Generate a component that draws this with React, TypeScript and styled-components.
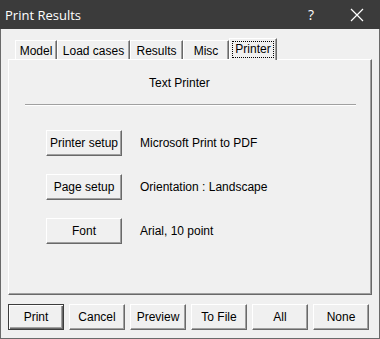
import { FunctionComponent } from 'react'
import styled, { createGlobalStyle } from 'styled-components'

const GlobalStyle = createGlobalStyle`
  html, body {
    margin: 0;
    padding: 0;
    background: #f0f0f0;
  }
  body {
    font-family: "Liberation Sans", Arial, sans-serif;
    font-size: 12px;
    color: #000;
  }
`

const Window = styled.div`
  width: 380px;
  height: 339px;
  box-sizing: border-box;
  display: flex;
  flex-direction: column;
  background: #f0f0f0;
  border: 1px solid #6a6a6a;
  border-top: none;
`

const TitleBar = styled.div`
  height: 29px;
  flex: none;
  display: flex;
  align-items: center;
  background: #3b3b3b;
  color: #fff;
  font-family: "Open Sans", "Noto Sans", sans-serif;
  font-size: 13px;
  padding-left: 5px;
  margin: 0 -1px;
`

const Title = styled.span`
  flex: 1;
`

const TitleButton = styled.span`
  width: 46px;
  height: 29px;
  display: flex;
  align-items: center;
  justify-content: center;
  font-size: 14px;
`

const Body = styled.div`
  flex: 1;
  display: flex;
  flex-direction: column;
  padding: 8px 7px 0 7px;
`

const TabStrip = styled.div`
  display: flex;
  align-items: flex-end;
  height: 22px;
  padding-left: 7px;
  position: relative;
  z-index: 1;
`

const Tab = styled.div<{ $active?: boolean; $width: number }>`
  box-sizing: border-box;
  width: ${p => p.$width}px;
  height: ${p => (p.$active ? 22 : 19)}px;
  display: flex;
  align-items: center;
  justify-content: center;
  border-left: 1px solid #fff;
  border-top: 1px solid #fff;
  border-right: 1px solid #696969;
  box-shadow: inset -1px 0 0 #a0a0a0;
  background: #f0f0f0;
  margin-bottom: ${p => (p.$active ? '-1px' : '0')};
  padding-top: ${p => (p.$active ? '0' : '1px')};
`

const FocusLabel = styled.span`
  outline: 1px dotted #000;
  padding: 0 2px;
  line-height: 15px;
`

const Panel = styled.div`
  height: 236px;
  box-sizing: border-box;
  border: 1px solid;
  border-color: #fff #696969 #696969 #fff;
  box-shadow: inset -1px -1px 0 #a0a0a0;
  display: flex;
  flex-direction: column;
  padding: 0 16px;
`

const Heading = styled.div`
  padding: 16px 0 0 124px;
  height: 20px;
`

const Separator = styled.div`
  height: 1px;
  background: #a0a0a0;
  border-bottom: 1px solid #fff;
  margin: 8px 0 0 0;
  width: 331px;
`

const Rows = styled.div`
  display: flex;
  flex-direction: column;
  gap: 18px;
  padding: 24px 0 0 21px;
`

const Row = styled.div`
  display: flex;
  align-items: center;
  gap: 18px;
`

const Button = styled.button<{ $default?: boolean; $width?: number }>`
  box-sizing: border-box;
  width: ${p => p.$width ?? 76}px;
  height: 26px;
  font: inherit;
  color: #000;
  background: #f0f0f0;
  padding: 0;
  border: 1px solid;
  border-color: ${p => (p.$default ? '#3c3c3c' : '#fff #696969 #696969 #fff')};
  box-shadow: ${p =>
    p.$default
      ? 'inset 1px 1px 0 #fff, inset -1px -1px 0 #696969, inset -2px -2px 0 #a0a0a0'
      : 'inset -1px -1px 0 #a0a0a0'};
  flex: none;
`

const ButtonBar = styled.div`
  display: flex;
  gap: 5px;
  padding: 9px 0 0 0;
`

const CloseIcon = () => (
  <svg width="14" height="14" viewBox="0 0 14 14">
    <path d="M1 1 L13 13 M13 1 L1 13" stroke="#fff" strokeWidth="1.2" fill="none" />
  </svg>
)

const tabs = [
  { label: 'Model', width: 42 },
  { label: 'Load cases', width: 73 },
  { label: 'Results', width: 53 },
  { label: 'Misc', width: 46 },
]

const rows = [
  { button: 'Printer setup', value: 'Microsoft Print to PDF' },
  { button: 'Page setup', value: 'Orientation : Landscape' },
  { button: 'Font', value: 'Arial, 10 point' },
]

const actions = ['Print', 'Cancel', 'Preview', 'To File', 'All', 'None']

const App: FunctionComponent = () => (
  <>
    <GlobalStyle />
    <Window>
      <TitleBar>
        <Title>Print Results</Title>
        <TitleButton>?</TitleButton>
        <TitleButton>
          <CloseIcon />
        </TitleButton>
      </TitleBar>
      <Body>
        <TabStrip>
          {tabs.map(t => (
            <Tab key={t.label} $width={t.width}>
              {t.label}
            </Tab>
          ))}
          <Tab $active $width={48}>
            <FocusLabel>Printer</FocusLabel>
          </Tab>
        </TabStrip>
        <Panel>
          <Heading>Text Printer</Heading>
          <Separator />
          <Rows>
            {rows.map(r => (
              <Row key={r.button}>
                <Button>{r.button}</Button>
                <span>{r.value}</span>
              </Row>
            ))}
          </Rows>
        </Panel>
        <ButtonBar>
          {actions.map((a, i) => (
            <Button key={a} $default={i === 0} $width={56}>
              {a}
            </Button>
          ))}
        </ButtonBar>
      </Body>
    </Window>
  </>
)

export default App
